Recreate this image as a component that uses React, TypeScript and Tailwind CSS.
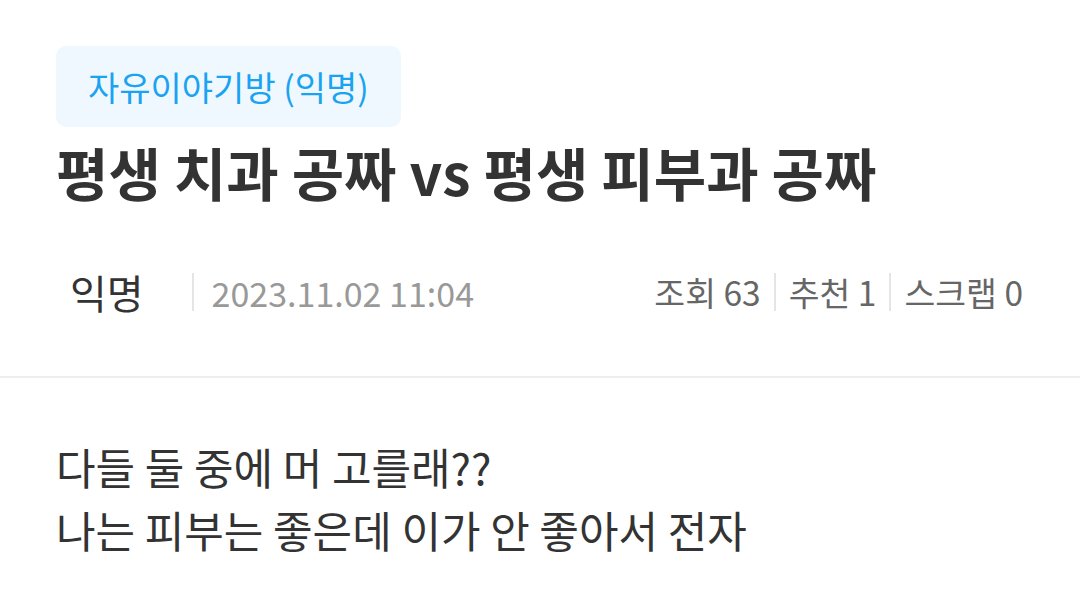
export default function App() {
  const font = { fontFamily: '"Noto Sans CJK KR", "Noto Sans", sans-serif' };
  return (
    <div className="w-[1080px] h-[614px] bg-white overflow-hidden" style={font}>
      <div className="px-[56px] pt-[46px]">
        <div className="inline-flex items-center h-[81px] px-[32px] rounded-[10px] bg-[#f0f8ff] text-[#1aa3f0] text-[34px]">
          자유이야기방 (익명)
        </div>
        <h1 className="mt-[12px] text-[57px] font-bold leading-[64px] text-[#333333]">
          평생 치과 공짜 vs 평생 피부과 공짜
        </h1>
      </div>
      <div className="mt-[61px] flex items-center justify-between pl-[70px] pr-[57px] h-[56px]">
        <div className="flex items-center">
          <span className="text-[40px] text-[#333333]">익명</span>
          <span className="ml-[48px] mr-[18px] w-[2px] h-[38px] bg-[#e5e5e5]" />
          <span className="text-[34px] text-[#999999]">2023.11.02 11:04</span>
        </div>
        <div className="flex items-center text-[33.5px] text-[#666666]">
          <span>조회 63</span>
          <span className="mx-[13px] w-[2px] h-[38px] bg-[#e5e5e5]" />
          <span>추천 1</span>
          <span className="mx-[13px] w-[2px] h-[38px] bg-[#e5e5e5]" />
          <span>스크랩 0</span>
        </div>
      </div>
      <div className="mt-[56px] h-[2px] bg-[#eeeeee]" />
      <div className="px-[56px] pt-[57px] text-[43px] leading-[63px] text-[#333333]">
        <p>다들 둘 중에 머 고를래??</p>
        <p>나는 피부는 좋은데 이가 안 좋아서 전자</p>
      </div>
    </div>
  );
}
